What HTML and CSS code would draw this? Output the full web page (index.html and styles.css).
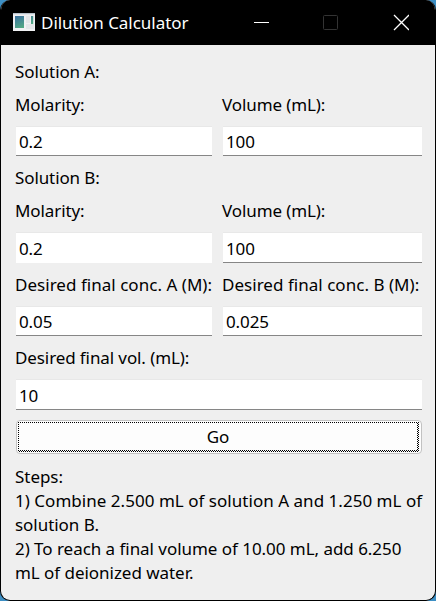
FILE: index.html
```html
<!DOCTYPE html>
<html lang="en">
<head>
<meta charset="utf-8">
<title>Dilution Calculator</title>
<link rel="stylesheet" href="styles.css">
</head>
<body>
<div class="window">
  <header class="titlebar">
    <svg class="app-icon" width="22" height="18" viewBox="0 0 22 18">
      <defs><linearGradient id="g" x1="0" y1="0" x2=".6" y2="1"><stop offset="0" stop-color="#3a6fa0"/><stop offset="1" stop-color="#55b080"/></linearGradient></defs>
      <path fill="#f0f1f3" d="M0 0h22v18H0z"/>
      <path fill="#b9c3cc" d="M0 0h22v1.3H0z"/>
      <path fill="#d8dcdf" d="M13 3h4v7h-4zM13 11h8v5h-8z" opacity=".5"/>
      <path fill="url(#g)" d="M2 3h9v12H2zM18 3h2.2v8H18z"/>
    </svg>
    <h1 class="title">Dilution Calculator</h1>
    <svg class="controls" width="158" height="45" viewBox="0 0 158 45" fill="none">
      <path stroke="#fff" d="M3 22.5h15"/>
      <rect x="72.5" y="15.5" width="14" height="14" rx="1" stroke="#333"/>
      <path stroke="#fff" stroke-width="1.3" d="M143 15l15 15M158 15l-15 15"/>
    </svg>
  </header>
  <main class="form">
    <div class="label wide">Solution A:</div>
    <div class="label">Molarity:</div><div class="label">Volume (mL):</div>
    <div class="field">0.2</div><div class="field">100</div>
    <div class="label wide">Solution B:</div>
    <div class="label">Molarity:</div><div class="label">Volume (mL):</div>
    <div class="field tall borderless">0.2</div><div class="field tall">100</div>
    <div class="label conc">Desired final conc. A (M):</div><div class="label conc">Desired final conc. B (M):</div>
    <div class="field">0.05</div><div class="field">0.025</div>
    <div class="label wide">Desired final vol. (mL):</div>
    <div class="field tall wide">10</div>
    <button class="go"><svg class="focus" width="401" height="30"><defs><pattern id="dots" width="2" height="2" patternUnits="userSpaceOnUse"><path fill="#000" d="M0 0h1v1H0zM1 1h1v1H1z"/></pattern></defs><path fill="url(#dots)" fill-rule="evenodd" d="M0 0h401v30H0zM1 1v27h398V1z"/></svg>Go</button>
    <div class="steps wide">Steps:<br><span class="combine">1) Combine 2.500 mL of solution A and 1.250 mL of</span><br>solution B.<br>2) To reach a final volume of 10.00 mL, add 6.250<br>mL of deionized water.</div>
  </main>
</div>
</body>
</html>
```
FILE: styles.css
```css
* { box-sizing: border-box; }
body {
  margin: 0;
  background: #3d8fc4;
  font: 17px/24px "Noto Sans", "Open Sans", sans-serif;
  color: #000;
}
.window {
  width: 436px;
  height: 601px;
  border: 1px solid #000;
  border-top: 0;
  border-radius: 10px;
  background: #efefef;
  overflow: hidden;
}
.titlebar {
  display: flex;
  align-items: center;
  height: 45px;
  padding-left: 12px;
  background: #000;
  color: #fff;
}
.app-icon { flex: none; margin-bottom: 2px; }
.title {
  margin: 0 auto 0 6px;
  font-size: 17px;
  font-weight: 400;
  letter-spacing: -0.03px;
  white-space: nowrap;
}
.controls { flex: none; margin-right: 26px; }
.form {
  display: grid;
  grid-template-columns: 198px 201px;
  grid-template-rows: 24px 24px 31px 24px 24px 32px 24px 31px 24px 32px 36px auto;
  gap: 9px;
  padding: 15px 13px 0;
  letter-spacing: -0.1px;
}
.wide { grid-column: 1 / -1; }
.label { padding-left: 1px; white-space: nowrap; }
.conc { letter-spacing: 0.03px; }
.field {
  height: 30px;
  margin-left: 2px;
  padding: 4px 0 0 3px;
  background: #fff;
  border: solid #e8e8e8;
  border-width: 1px 0 1px;
  border-bottom-color: #868686;
  line-height: 22px;
}
.tall { height: 31px; padding-top: 5px; }
.field.wide { margin-left: 2px; }
.borderless { border-bottom-color: #fff; }
.go {
  position: relative;
  grid-column: 1 / -1;
  height: 34px;
  margin: 0 0 0 2px;
  padding: 0 2px 0 0;
  border: 1px solid #c2c2c2;
  border-radius: 4px;
  background: #fdfdfd;
  font: inherit;
  color: inherit;
}
.focus { position: absolute; left: 1px; top: 1px; }
.steps { padding-left: 1px; white-space: nowrap; letter-spacing: -0.04px; }
.combine { letter-spacing: 0.03px; }
```
